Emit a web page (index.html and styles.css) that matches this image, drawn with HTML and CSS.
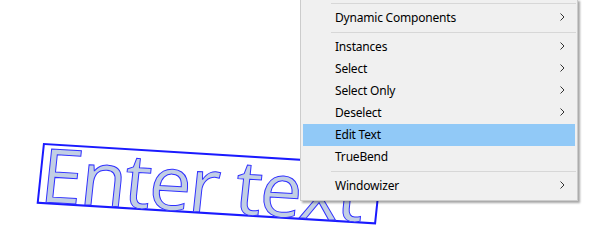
FILE: index.html
```html
<!DOCTYPE html>
<html lang="en">
<head>
   <meta charset="utf-8"/>
   <link rel="stylesheet" href="styles.css">
</head>
<body>
<!-- model canvas with 3D text -->
<div class="canvas">
   <div class="label3d"><span>Enter text</span></div>

   <!-- context menu -->
   <div class="menu">
      <div class="sep"></div>
      <div class="item">Dynamic Components<svg class="arrow" viewBox="0 0 5 8"><polyline points="0.5,0.5 4,4 0.5,7.5"/></svg></div>
      <div class="sep"></div>
      <div class="item">Instances<svg class="arrow" viewBox="0 0 5 8"><polyline points="0.5,0.5 4,4 0.5,7.5"/></svg></div>
      <div class="item">Select<svg class="arrow" viewBox="0 0 5 8"><polyline points="0.5,0.5 4,4 0.5,7.5"/></svg></div>
      <div class="item">Select Only<svg class="arrow" viewBox="0 0 5 8"><polyline points="0.5,0.5 4,4 0.5,7.5"/></svg></div>
      <div class="item">Deselect<svg class="arrow" viewBox="0 0 5 8"><polyline points="0.5,0.5 4,4 0.5,7.5"/></svg></div>
      <div class="item active">Edit Text</div>
      <div class="item">TrueBend</div>
      <div class="sep"></div>
      <div class="item">Windowizer<svg class="arrow" viewBox="0 0 5 8"><polyline points="0.5,0.5 4,4 0.5,7.5"/></svg></div>
   </div>
</div>
</body>
</html>
```

FILE: styles.css
```css
/* page */
body {
   margin: 0;
   background: #ffffff;
   font-family: "Noto Sans", "Open Sans", sans-serif;
}

.canvas {
   position: relative;
   width: 606px;
   height: 244px;
   overflow: hidden;
}

/* the 3D text on the model */
.label3d {
   position: absolute;
   left: 43px;
   top: 143px;
   width: 336px;
   height: 57px;
   border: 2px solid #1a1aff;
   transform-origin: 0 0;
   transform: rotate(3.5deg) skewX(-2.5deg);
   overflow: visible;
}

.label3d span {
   display: block;
   margin-left: 0px;
   margin-top: -22px;
   font-family: "Open Sans", sans-serif;
   font-weight: 400;
   font-size: 75px;
   line-height: 100px;
   letter-spacing: -2px;
   color: #c2cfe4;
   -webkit-text-stroke: 1px #3030ff;
   white-space: nowrap;
}

/* context menu */
.menu {
   position: absolute;
   left: 300px;
   top: -1px;
   width: 276px;
   background: #f0f0f0;
   border: 1px solid #cccccc;
   padding-bottom: 3px;
   box-shadow: 2px 2px 2px rgba(0, 0, 0, 0.35);
   font-size: 12px;
   letter-spacing: -0.2px;
   color: #000000;
   z-index: 2;
}

.sep {
   height: 7px;
   display: flex;
   align-items: center;
   padding: 0 1px 0 30px;
}

.sep::after {
   content: "";
   flex: 1;
   height: 1px;
   background: #d7d7d7;
}

.item {
   height: 22px;
   margin: 0 2px;
   padding: 0 10px 2px 32px;
   box-sizing: border-box;
   display: flex;
   align-items: center;
   justify-content: space-between;
}

.item.active {
   background: #91c9f7;
}

.arrow {
   width: 5px;
   height: 8px;
   fill: none;
   stroke: #333333;
   stroke-width: 1;
}
```
